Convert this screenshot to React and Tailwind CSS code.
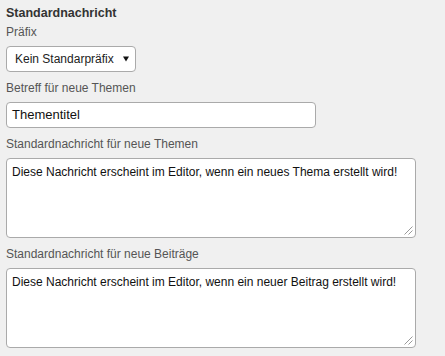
export default function App() {
  const font = { fontFamily: '"Liberation Sans", Arial, sans-serif' };
  return (
    <div className="w-[445px] h-[356px] bg-[#f0f0f0] overflow-hidden pl-[6px] pt-[4px] text-[12px] text-[#555] whitespace-nowrap" style={font}>
      <div className="font-bold text-[12.5px] text-[#333] leading-[18px]">Standardnachricht</div>
      <div className="leading-[16px] mt-[2px]">Präfix</div>
      <div className="mt-[6px] w-[130px] h-[26px] bg-white border border-[#aaa] rounded-[4px] flex items-center justify-between pl-[8px] pr-[6px] text-[#222] text-[12px]">
        <span>Kein Standarpräfix</span>
        <svg width="6" height="6" viewBox="0 0 6 6"><path d="M0 0.5H6L3 5.5Z" fill="#111" /></svg>
      </div>
      <div className="leading-[16px] mt-[8px]">Betreff für neue Themen</div>
      <div className="mt-[6px] w-[310px] h-[26px] bg-white border border-[#aaa] rounded-[4px] flex items-center pl-[5px] text-[#111] text-[13px]">Thementitel</div>
      <div className="leading-[16px] mt-[8px]">Standardnachricht für neue Themen</div>
      <div className="relative mt-[6px] w-[410px] h-[80px] bg-white border border-[#aaa] rounded-[4px] pl-[5px] pt-[5px] text-[#111] text-[12px] leading-[16px]">
        Diese Nachricht erscheint im Editor, wenn ein neues Thema erstellt wird!
        <Grip />
      </div>
      <div className="leading-[16px] mt-[8px]">Standardnachricht für neue Beiträge</div>
      <div className="relative mt-[6px] w-[410px] h-[80px] bg-white border border-[#aaa] rounded-[4px] pl-[5px] pt-[5px] text-[#111] text-[12px] leading-[16px]">
        Diese Nachricht erscheint im Editor, wenn ein neuer Beitrag erstellt wird!
        <Grip />
      </div>
    </div>
  );
}

function Grip() {
  return (
    <svg className="absolute right-[2px] bottom-[2px]" width="9" height="9" viewBox="0 0 9 9">
      <path d="M8.5 0.5L0.5 8.5M8.5 4.5L4.5 8.5" stroke="#999" strokeWidth="1" />
    </svg>
  );
}
